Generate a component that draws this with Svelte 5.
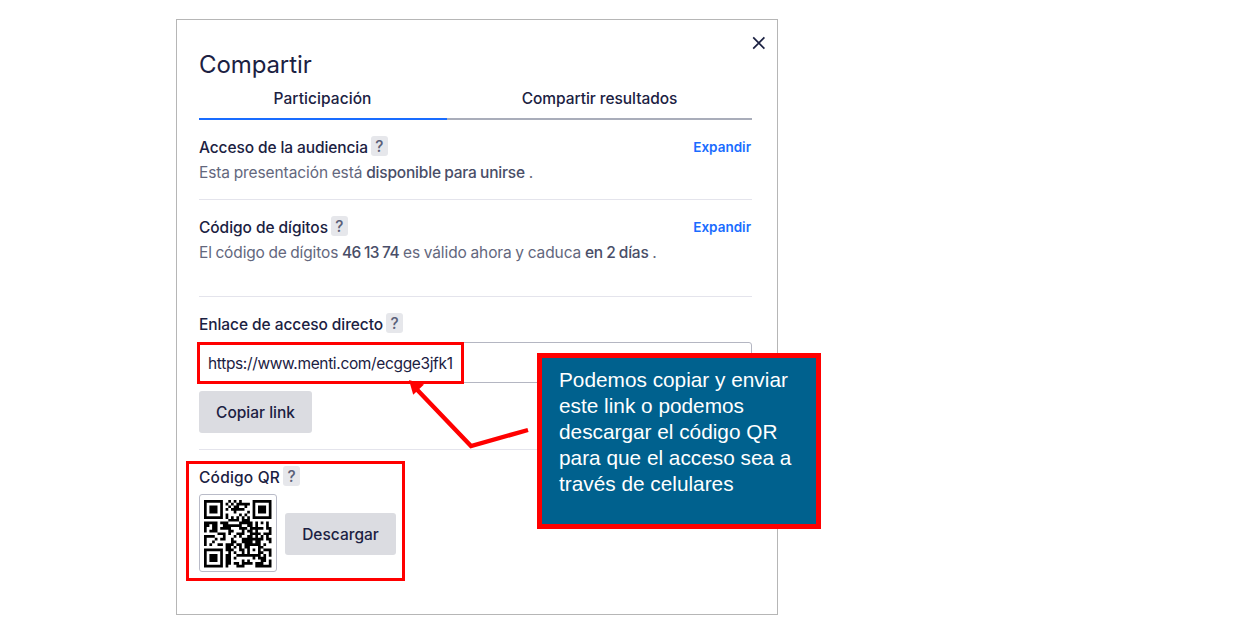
<script>
  const link = 'https://www.menti.com/ecgge3jfk1';
  const size = 25;

  // Multiplication in GF(256), used for the error correction bytes.
  function mul(a, b) {
    let r = 0;
    for (; b; b >>= 1) {
      if (b & 1) r ^= a;
      a <<= 1;
      if (a & 256) a ^= 0x11d;
    }
    return r;
  }

  const byte = (n) => n.toString(2).padStart(8, '0');

  // Version 2-L: 34 data codewords and 10 error correction codewords.
  function codewords(text) {
    const bits = ('0100' + byte(text.length) + [...text].map((c) => byte(c.charCodeAt(0))).join('')).padEnd(272, '0');
    const data = bits.match(/.{8}/g).map((b) => parseInt(b, 2));
    let gen = [1];
    for (let i = 0, root = 1; i < 10; i++, root = mul(root, 2)) {
      const next = [...gen, 0];
      gen.forEach((g, j) => (next[j + 1] ^= mul(g, root)));
      gen = next;
    }
    const rem = [...data, ...Array(10).fill(0)];
    for (let i = 0; i < 34; i++) {
      const f = rem[i];
      gen.forEach((g, j) => (rem[i + j] ^= mul(g, f)));
    }
    return [...data, ...rem.slice(34)];
  }

  function qrPath(text) {
    const m = Array.from({ length: size }, () => Array(size).fill(null));
    const square = (cr, cc, rad) => {
      for (let r = -rad; r <= rad; r++)
        for (let c = -rad; c <= rad; c++) {
          const d = Math.max(Math.abs(r), Math.abs(c));
          if (m[cr + r] && cc + c >= 0 && cc + c < size) m[cr + r][cc + c] = rad === 4 ? d < 2 || d === 3 : d !== 1;
        }
    };
    square(3, 3, 4);
    square(3, 21, 4);
    square(21, 3, 4);
    square(18, 18, 2);
    for (let i = 8; i < 17; i++) m[6][i] = m[i][6] = i % 2 === 0;

    // Format bits for level L, mask 2.
    const bit = (i) => '111110110101010'[14 - i] === '1';
    for (let i = 0; i < 6; i++) m[i][8] = bit(i);
    m[7][8] = bit(6);
    m[8][8] = bit(7);
    m[8][7] = bit(8);
    for (let i = 9; i < 15; i++) m[8][14 - i] = bit(i);
    for (let i = 0; i < 8; i++) m[8][size - 1 - i] = bit(i);
    for (let i = 8; i < 15; i++) m[size - 15 + i][8] = bit(i);
    m[size - 8][8] = true;

    const stream = codewords(text).map(byte).join('');
    let k = 0;
    for (let right = size - 1; right > 0; right -= 2) {
      if (right === 6) right = 5;
      const up = ((right + 1) & 2) === 0;
      for (let v = 0; v < size; v++)
        for (let j = 0; j < 2; j++) {
          const c = right - j;
          const r = up ? size - 1 - v : v;
          if (m[r][c] === null) m[r][c] = (stream[k++] === '1') !== (c % 3 === 0);
        }
    }
    return m.flatMap((row, r) => row.map((on, c) => (on ? `M${c} ${r}h1v1h-1z` : ''))).join('');
  }

  const code = qrPath(link);
</script>

<main>
  <section class="dialog">
    <button class="close" aria-label="Cerrar">
      <svg width="14" height="14" viewBox="0 0 14 14"><path d="M1.2 1.4 12.4 12.6M12.4 1.4 1.2 12.6" /></svg>
    </button>
    <h1>Compartir</h1>
    <nav>
      <span class="tab active">Participación</span>
      <span class="tab results">Compartir resultados</span>
    </nav>

    <div class="block audience">
      <header>
        <h2 class="h-a">Acceso de la audiencia</h2><span class="help">?</span>
        <span class="expand">Expandir</span>
      </header>
      <p><span class="p-a">Esta presentación está</span> <b class="b-a">disponible para unirse</b> .</p>
    </div>

    <div class="block digits">
      <header>
        <h2 class="h-b">Código de dígitos</h2><span class="help">?</span>
        <span class="expand">Expandir</span>
      </header>
      <p><span class="p-b">El código de dígitos</span> <b class="b-b">46 13 74</b> <span class="p-c">es válido ahora y caduca</span> <b class="b-c">en 2 días</b> .</p>
    </div>

    <div class="block direct">
      <header><h2 class="h-c">Enlace de acceso directo</h2><span class="help">?</span></header>
      <div class="field"><span>{link}</span></div>
      <button class="btn copy">Copiar link</button>
    </div>

    <div class="block code">
      <header><h2 class="h-d">Código QR</h2><span class="help">?</span></header>
      <div class="row">
        <div class="qr"><svg width="67.5" height="67.5" viewBox="0 0 25 25"><path d={code} /></svg></div>
        <button class="btn download">Descargar</button>
      </div>
    </div>
  </section>

  <div class="mark link-mark"></div>
  <div class="mark qr-mark"></div>
  <svg class="arrow" width="130" height="80" viewBox="400 375 130 80">
    <path d="M415 387.5 471 446 528 430" />
    <polygon points="409,380 424,384.5 413.2,394.8" />
  </svg>
  <aside>Podemos copiar y enviar<br />este link o podemos<br />descargar el código QR<br />para que el acceso sea a<br />través de celulares</aside>
</main>

<style>
  :global(body) { margin: 0; background: #fff; }
  main { position: relative; width: 1237px; height: 643px; overflow: hidden; font: 15.5px/20px Inter, sans-serif; color: #1b2142; }
  .dialog { position: relative; box-sizing: border-box; width: 602px; height: 596px; margin: 19px 0 0 176px; padding: 31px 25px 0 22px; border: 1px solid #b6b6b6; display: flow-root; }
  .close { position: absolute; top: 16px; right: 11px; width: 14px; height: 14px; padding: 0; border: 0; background: none; }
  .close svg { display: block; fill: none; stroke: #1b2142; stroke-width: 1.7; }
  h1 { margin: 0; height: 28px; font-size: 24px; line-height: 27px; font-weight: 400; letter-spacing: -0.1px; }
  nav { display: flex; height: 41px; }
  .tab { box-sizing: border-box; width: 305px; padding-top: 10px; text-align: center; font-weight: 500; border-bottom: 2px solid #a9adba; letter-spacing: -0.05px; }
  .tab.active { width: 248px; padding-right: 1px; border-color: #196cff; letter-spacing: 0.07px; }
  .tab.results { flex: 1; }
  .block { box-sizing: border-box; border-bottom: 1px solid #e4e4ec; }
  .audience { height: 80px; padding-top: 17px; }
  .digits { height: 97px; padding-top: 17px; }
  .direct { height: 153px; padding-top: 17px; }
  .code { border: 0; padding-top: 17px; }
  header { display: flex; height: 21px; }
  h2 { margin: 0; font-size: 15.5px; line-height: 21px; font-weight: 500; white-space: nowrap; }
  .h-a { letter-spacing: -0.1px; }
  .h-b { letter-spacing: -0.06px; }
  .h-c { letter-spacing: -0.07px; }
  .h-d { letter-spacing: 0.2px; }
  .help { width: 17px; height: 20px; margin: -1px 0 0 3px; border-radius: 3px; background: #e6e7eb; color: #5a5f78; font-weight: 500; line-height: 21px; text-align: center; }
  .expand { margin-left: auto; padding-right: 1px; color: #196cff; font-size: 13.5px; font-weight: 600; }
  p { margin: 5px 0 0; color: #63677d; white-space: nowrap; word-spacing: -0.6px; }
  b { font-weight: 500; color: #494e68; }
  .p-a { letter-spacing: -0.09px; }
  .b-a { letter-spacing: -0.19px; }
  .p-b { letter-spacing: -0.14px; }
  .b-b { letter-spacing: -0.5px; }
  .p-c { letter-spacing: -0.09px; }
  .b-c { letter-spacing: -0.24px; }
  .field { box-sizing: border-box; height: 41px; margin-top: 7px; padding: 11px 8px; border: 1px solid #b4b6c2; border-radius: 3px; letter-spacing: -0.35px; }
  .btn { display: block; box-sizing: border-box; height: 42px; padding: 0; border: 0; border-radius: 3px; background: #dbdce1; color: #1b2142; font: 500 15.5px/43px Inter, sans-serif; text-align: center; }
  .copy { width: 113px; margin-top: 8px; }
  .download { width: 111px; margin-top: 19px; }
  .row { display: flex; align-items: flex-start; gap: 8px; margin-top: 6px; }
  .qr { box-sizing: border-box; width: 78px; height: 78px; padding: 5px 4px; border: 1px solid #b9bbc8; border-radius: 3px; }
  .qr svg { display: block; }
  .mark { position: absolute; box-sizing: border-box; border: 3px solid #f00; }
  .link-mark { left: 197px; top: 342px; width: 267px; height: 42px; }
  .qr-mark { left: 186px; top: 461px; width: 219px; height: 120px; }
  .arrow { position: absolute; left: 400px; top: 375px; fill: #f00; }
  .arrow path { fill: none; stroke: #f00; stroke-width: 4.4; }
  aside { position: absolute; box-sizing: border-box; left: 537px; top: 353px; width: 284px; height: 176px; padding: 9px 17px; border: 5px solid #f00; background: #00618e; color: #fff; font: 20.8px/26px 'Liberation Sans', Arial, sans-serif; white-space: nowrap; }
</style>
